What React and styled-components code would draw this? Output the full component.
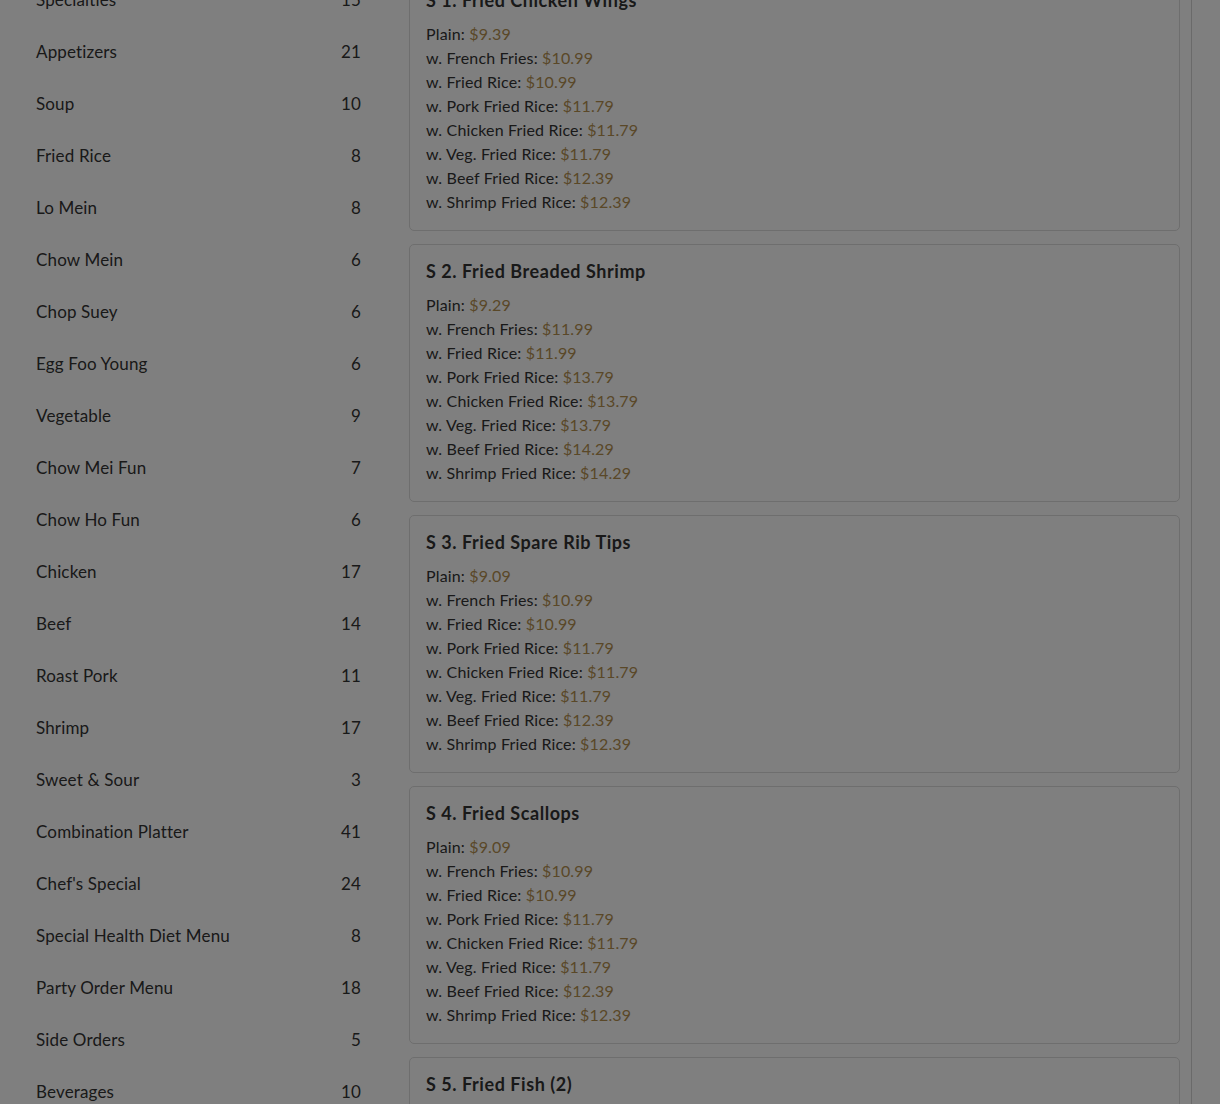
import React from 'react';
import styled, { createGlobalStyle } from 'styled-components';

const categories = [
  ['Specialties', 15], ['Appetizers', 21], ['Soup', 10], ['Fried Rice', 8],
  ['Lo Mein', 8], ['Chow Mein', 6], ['Chop Suey', 6], ['Egg Foo Young', 6],
  ['Vegetable', 9], ['Chow Mei Fun', 7], ['Chow Ho Fun', 6], ['Chicken', 17],
  ['Beef', 14], ['Roast Pork', 11], ['Shrimp', 17], ['Sweet & Sour', 3],
  ['Combination Platter', 41], ["Chef's Special", 24], ['Special Health Diet Menu', 8],
  ['Party Order Menu', 18], ['Side Orders', 5], ['Beverages', 10],
];

const opts = ['Plain', 'w. French Fries', 'w. Fried Rice', 'w. Pork Fried Rice',
  'w. Chicken Fried Rice', 'w. Veg. Fried Rice', 'w. Beef Fried Rice', 'w. Shrimp Fried Rice'];

const items = [
  { name: 'S 1. Fried Chicken Wings', prices: ['9.39', '10.99', '10.99', '11.79', '11.79', '11.79', '12.39', '12.39'] },
  { name: 'S 2. Fried Breaded Shrimp', prices: ['9.29', '11.99', '11.99', '13.79', '13.79', '13.79', '14.29', '14.29'] },
  { name: 'S 3. Fried Spare Rib Tips', prices: ['9.09', '10.99', '10.99', '11.79', '11.79', '11.79', '12.39', '12.39'] },
  { name: 'S 4. Fried Scallops', prices: ['9.09', '10.99', '10.99', '11.79', '11.79', '11.79', '12.39', '12.39'] },
  { name: 'S 5. Fried Fish (2)', prices: ['9.09', '10.99', '10.99', '11.79', '11.79', '11.79', '12.39', '12.39'] },
];

const GlobalStyle = createGlobalStyle`
  body {
    margin: 0;
    background: #fff;
    font-family: 'Lato', 'Open Sans', sans-serif;
    color: #333;
    overflow: hidden;
  }
`;

const Page = styled.div`
  display: flex;
  gap: 24px;
  margin-top: -27px;
  height: 1200px;
`;

const Sidebar = styled.ul`
  list-style: none;
  margin: 0;
  padding: 0 24px 0 36px;
  width: 325px;
  flex-shrink: 0;
`;

const CatRow = styled.li`
  display: flex;
  justify-content: space-between;
  align-items: center;
  height: 52px;
  font-size: 17px;
  letter-spacing: 0.15px;
  color: #333;
`;

const Main = styled.div`
  width: 771px;
  padding-right: 11px;
  border-right: 1px solid #d4d4d4;
  display: flex;
  flex-direction: column;
  gap: 13px;
`;

const Card = styled.div`
  border: 1px solid #dcdcdc;
  border-radius: 5px;
  padding: 15px 16px 16px;
`;

const Title = styled.h3`
  margin: 0 0 11px;
  font-size: 18px;
  font-weight: 700;
  line-height: 22px;
  letter-spacing: 0.55px;
  color: #333;
`;

const Line = styled.div`
  font-size: 16px;
  line-height: 24px;
  letter-spacing: 0.15px;
  color: #333;
`;

const Price = styled.span`
  color: #b49050;
`;

const Overlay = styled.div`
  position: fixed;
  inset: 0;
  background: rgba(0, 0, 0, 0.5);
`;

export default function App() {
  return (
    <>
      <GlobalStyle />
      <Page>
        <Sidebar>
          {categories.map(([name, n]) => (
            <CatRow key={name}>
              <span>{name}</span>
              <span>{n}</span>
            </CatRow>
          ))}
        </Sidebar>
        <Main>
          {items.map((it) => (
            <Card key={it.name}>
              <Title>{it.name}</Title>
              {opts.map((o, i) => (
                <Line key={o}>
                  {o}: <Price>${it.prices[i]}</Price>
                </Line>
              ))}
            </Card>
          ))}
        </Main>
      </Page>
      <Overlay />
    </>
  );
}
